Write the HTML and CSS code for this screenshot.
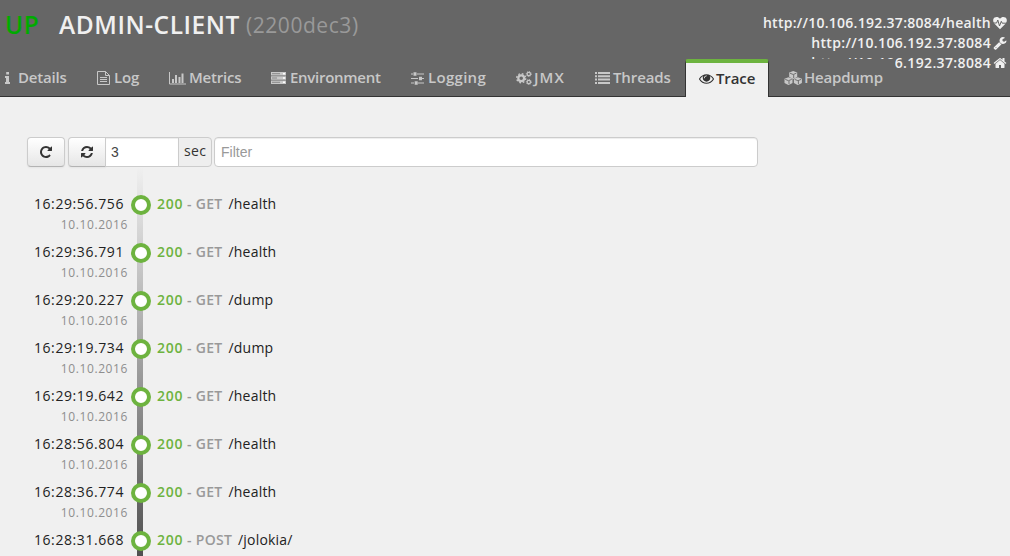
FILE: index.html
```
<!DOCTYPE html>
<html lang="en">
<head>
<meta charset="utf-8">
<title>Admin client - Trace</title>
<link rel="stylesheet" href="styles.css">
</head>
<body>
<header class="header">
  <div class="top">
    <h1 class="title"><span class="up">UP</span><span class="name">ADMIN-CLIENT</span><span class="id">(2200dec3)</span></h1>
    <div class="links">
      <a class="link"><span class="url health">http://10.106.192.37:8084/health</span><svg class="li" viewBox="0 0 14 14"><path fill="currentColor" d="M7 13.2L1.3 7.6C-.4 5.6-.1 2.8 1.6 1.6 3.300.4 5.600.9 7 2.800 8.400.9 10.700.4 12.400 1.600c1.700 1.200 2 4 .3 6z"/><path d="M0 7h3.600l1.200-3 1.700 6L8.300 5.300l.9 1.900H14" fill="none" stroke="#666" stroke-width="1"/></svg></a>
      <a class="link"><span class="url">http://10.106.192.37:8084</span><svg class="li" viewBox="0 0 1792 1792"><path fill="currentColor" d="M448 1472q0-26-19-45t-45-19-45 19-19 45 19 45 45 19 45-19 19-45zm644-420l-682 682q-37 37-90 37-52 0-91-37l-106-108q-38-36-38-90 0-53 38-91l681-681q39 98 114.500 173.500t173.500 114.500zm634-435q0 39-23 106-47 134-164.500 217.500t-258.500 83.500q-185 0-316.500-131.500t-131.500-316.500 131.500-316.500 316.500-131.500q58 0 121.500 16.500t107.500 46.500q16 11 16 28t-16 28l-293 169v224l193 107q5-3 79-48.500t135.500-81 70.500-35.500q15 0 23.500 10t8.500 25z"/></svg></a>
      <a class="link"><span class="url">http://10.106.192.37:8084</span><svg class="li" viewBox="0 0 1792 1792"><path fill="currentColor" d="M1472 992v480q0 26-19 45t-45 19h-384v-384h-256v384h-384q-26 0-45-19t-19-45v-480q0-1 .5-3t.5-3l575-474 575 474q1 2 1 6zm223-69l-62 74q-8 9-21 11h-3q-13 0-21-7l-692-577-692 577q-12 8-24 7-13-2-21-11l-62-74q-8-10-7-23.500t11-21.500l719-599q32-26 76-26t76 26l244 204v-195q0-14 9-23t23-9h192q14 0 23 9t9 23v408l219 182q10 8 11 21.500t-7 23.500z"/></svg></a>
    </div>
  </div>
  <nav class="tabs">
    <a class="tab details"><svg class="ico" viewBox="0 0 13 14"><path fill="currentColor" d="M1.200 1h2.800v2.500H1.200zM0 5h4v6h1v2H0v-2h1V7H0z"/></svg><span>Details</span></a>
    <a class="tab log"><svg class="ico" viewBox="0 0 17 14"><path fill="none" stroke="currentColor" d="M.5.5h8l4 4v9H.5zM8.500.5v4h4M3 6.500h7M3 8.500h7M3 10.500h7"/></svg><span>Log</span></a>
    <a class="tab metrics"><svg class="ico" viewBox="0 0 20 14"><path fill="none" stroke="currentColor" d="M.5 1v12H17"/><path fill="currentColor" d="M3 8h2v4H3zM6 4h2v8H6zM9.500 6h2v6h-2zM12.500 2.500h2V12h-2z"/></svg><span>Metrics</span></a>
    <a class="tab environment"><svg class="ico" viewBox="0 0 19 14"><path fill="currentColor" d="M0 1h15v3.500H0zM0 5.300h15v3.400H0zM0 9.500h15V13H0z"/><path stroke="#777" stroke-width=".8" d="M1 2.700h8M1 7h5M1 11.300h8"/><path stroke="#fff" stroke-width="1.500" d="M12 2.700h2M12 7h2M12 11.300h2"/></svg><span>Environment</span></a>
    <a class="tab logging"><svg class="ico" viewBox="0 0 17 14"><path stroke="currentColor" d="M0 3h2M6 3h7M0 7.500h7M11 7.500h2M0 12h3M7 12h6"/><path fill="currentColor" d="M2.500 1.300H5.500v3.400h-3zM8 5.800h3v3.400H8zM3.700 10.300h3v3.400h-3z"/></svg><span>Logging</span></a>
    <a class="tab jmx"><svg class="ico" viewBox="0 0 18 14"><g fill="none" stroke="currentColor"><circle cx="5.200" cy="7.200" r="2.900" stroke-width="2.200"/><circle cx="5.200" cy="7.200" r="4.500" stroke-width="1.400" stroke-dasharray="1.770 1.770"/><circle cx="12.800" cy="3" r="1.700" stroke-width="1.200"/><circle cx="12.800" cy="3" r="2.500" stroke-dasharray="1 .96"/><circle cx="12.800" cy="11" r="1.700" stroke-width="1.200"/><circle cx="12.800" cy="11" r="2.500" stroke-dasharray="1 .96"/></g></svg><span>JMX</span></a>
    <a class="tab threads"><svg class="ico" viewBox="0 0 18 14"><path stroke="currentColor" stroke-width="2" d="M0 2h2M3 2h12M0 5.300h2M3 5.300h12M0 8.600h2M3 8.600h12M0 11.900h2M3 11.900h12"/></svg><span>Threads</span></a>
    <a class="tab trace active"><svg class="ico" viewBox="0 0 1792 1792"><path fill="currentColor" d="M1664 960q-152-236-381-353 61 104 61 225 0 185-131.500 316.500t-316.500 131.500-316.500-131.500-131.500-316.500q0-121 61-225-229 117-381 353 133 205 333.500 326.500t434.500 121.500 434.500-121.500 333.500-326.500zm-720-384q0-20-14-34t-34-14q-125 0-214.500 89.500t-89.500 214.500q0 20 14 34t34 14 34-14 14-34q0-86 61-147t147-61q20 0 34-14t14-34zm848 384q0 34-20 69-140 230-376.500 368.500t-499.500 138.500-499.500-139-376.500-368q-20-35-20-69t20-69q140-229 376.500-368t499.500-139 499.500 139 376.500 368q20 35 20 69z"/></svg><span>Trace</span></a>
    <a class="tab heapdump"><svg class="ico" viewBox="0 0 20 14"><g id="cube"><path fill="currentColor" d="M9.200 0l4 1.600v4.300l-4 2-4-2V1.600z"/><path fill="none" stroke="#666" stroke-width=".9" d="M6 2.200l3.200 1.300 3.200-1.300M9.700 3.700V7"/></g><use href="#cube" x="-4.700" y="6.200"/><use href="#cube" x="4.700" y="6.200"/></svg><span>Heapdump</span></a>
  </nav>
</header>
<main class="content">
  <div class="toolbar">
    <button class="btn"><svg viewBox="0 0 1792 1792"><path fill="currentColor" d="M1664 256v448q0 26-19 45t-45 19h-448q-42 0-59-40-17-39 14-69l138-138q-148-137-349-137-104 0-198.500 40.500t-163.500 109.500-109.500 163.500-40.500 198.500 40.500 198.500 109.500 163.500 163.500 109.500 198.500 40.500q119 0 225-52t179-147q7-10 23-12 15 0 25 9l137 138q9 8 9.500 20.500t-7.500 22.500q-109 132-264 204.500t-327 72.500q-156 0-298-61t-245-164-164-245-61-298 61-298 164-245 245-164 298-61q147 0 284.500 55.500t244.500 156.500l130-129q29-31 70-14 39 17 39 59z"/></svg></button>
    <div class="group">
      <button class="btn"><svg viewBox="0 0 1792 1792"><path fill="currentColor" d="M1639 1056q0 5-1 7-64 268-268 434.500t-478 166.500q-146 0-282.500-55t-243.500-157l-129 129q-19 19-45 19t-45-19-19-45v-448q0-26 19-45t45-19h448q26 0 45 19t19 45-19 45l-137 137q71 66 161 102t187 36q134 0 250-65t186-179q11-17 53-117 8-23 30-23h192q13 0 22.500 9.500t9.500 22.500zm25-800v448q0 26-19 45t-45 19h-448q-26 0-45-19t-19-45 19-45l138-138q-148-137-349-137-134 0-250 65t-186 179q-11 17-53 117-8 23-30 23h-199q-13 0-22.500-9.500t-9.500-22.500v-7q65-268 270-434.500t480-166.500q146 0 284 55.500t245 156.500l130-129q19-19 45-19t45 19 19 45z"/></svg></button>
      <div class="seconds">3</div>
      <div class="addon">sec</div>
    </div>
    <div class="filter">Filter</div>
  </div>
  <ul class="timeline">
    <li class="event"><div class="when"><span class="time">16:29:56.756</span><span class="date">10.10.2016</span></div><i class="dot"></i><div class="what"><span class="status">200</span><span class="method">- GET</span><span class="path">/health</span></div></li>
    <li class="event"><div class="when"><span class="time">16:29:36.791</span><span class="date">10.10.2016</span></div><i class="dot"></i><div class="what"><span class="status">200</span><span class="method">- GET</span><span class="path">/health</span></div></li>
    <li class="event"><div class="when"><span class="time">16:29:20.227</span><span class="date">10.10.2016</span></div><i class="dot"></i><div class="what"><span class="status">200</span><span class="method">- GET</span><span class="path">/dump</span></div></li>
    <li class="event"><div class="when"><span class="time">16:29:19.734</span><span class="date">10.10.2016</span></div><i class="dot"></i><div class="what"><span class="status">200</span><span class="method">- GET</span><span class="path">/dump</span></div></li>
    <li class="event"><div class="when"><span class="time">16:29:19.642</span><span class="date">10.10.2016</span></div><i class="dot"></i><div class="what"><span class="status">200</span><span class="method">- GET</span><span class="path">/health</span></div></li>
    <li class="event"><div class="when"><span class="time">16:28:56.804</span><span class="date">10.10.2016</span></div><i class="dot"></i><div class="what"><span class="status">200</span><span class="method">- GET</span><span class="path">/health</span></div></li>
    <li class="event"><div class="when"><span class="time">16:28:36.774</span><span class="date">10.10.2016</span></div><i class="dot"></i><div class="what"><span class="status">200</span><span class="method">- GET</span><span class="path">/health</span></div></li>
    <li class="event"><div class="when"><span class="time">16:28:31.668</span></div><i class="dot"></i><div class="what"><span class="status">200</span><span class="method post">- POST</span><span class="path jolokia">/jolokia/</span></div></li>
  </ul>
</main>
</body>
</html>
```
FILE: styles.css
```
* { box-sizing: border-box; }
body { margin: 0; height: 556px; overflow: hidden; background: #f0f0f0; color: #333; font: 14px/20px "Open Sans", "Noto Sans", sans-serif; }
.header { height: 97px; background: #666; border-bottom: 1px solid #333; display: flex; flex-direction: column; }
.top { height: 59px; display: flex; justify-content: space-between; align-items: flex-start; }
.title { margin: 5px 0 0 5px; font-size: 24.500px; line-height: 40px; font-weight: 600; display: flex; white-space: nowrap; }
.up { width: 54px; color: #00aa00; letter-spacing: .5px; }
.name { width: 187px; color: #f0f0f0; letter-spacing: .55px; }
.id { color: #999; font-size: 21px; font-weight: 500; letter-spacing: .55px; }
.links { padding: 13px 3px 0 0; display: flex; flex-direction: column; align-items: flex-end; }
.link { height: 20px; display: flex; align-items: center; gap: 2px; color: #f0f0f0; font-weight: 600; }
.li { width: 14px; height: 14px; }
.url { letter-spacing: .36px; }
.health { letter-spacing: .26px; }
.tabs { height: 38px; flex: none; display: flex; position: relative; }
.tab { height: 37px; padding: 0 0 0 14px; display: flex; align-items: center; background: #666; color: #c8c8c8; font-weight: 600; font-size: 15px; letter-spacing: -.2px; white-space: nowrap; }
.tab span { margin-top: -2px; }
.ico { height: 14px; flex: none; }
.details { width: 83px; padding-left: 5px; }
.details .ico { width: 13px; }
.log { width: 72px; }
.log .ico { width: 17px; }
.metrics { width: 102px; }
.metrics .ico { width: 20px; }
.environment { width: 140px; letter-spacing: -.28px; }
.environment .ico { width: 19px; }
.logging { width: 105px; letter-spacing: .3px; }
.logging .ico { width: 17px; }
.jmx { width: 79px; letter-spacing: 1.1px; }
.jmx .ico { width: 18px; }
.threads { width: 104px; letter-spacing: -.1px; }
.threads .ico { width: 18px; }
.trace { width: 84px; }
.trace .ico { width: 15px; height: 15px; margin-right: 2px; }
.heapdump { width: 126px; padding-left: 15px; }
.heapdump .ico { width: 20px; }
.tab.active { height: 38px; padding: 0 0 3px 13px; background: #f0f0f0; color: #333; border: 1px solid #333; border-top: 4px solid #6db33f; border-bottom: 0; border-radius: 3px 3px 0 0; letter-spacing: -.1px; }
.content { padding: 40px 0 0 27px; }
.toolbar { height: 30px; display: flex; }
.btn { width: 38px; height: 30px; padding: 0; display: flex; align-items: center; justify-content: center; color: #333; border: 1px solid #ccc; border-bottom-color: #b3b3b3; border-radius: 4px; background: linear-gradient(#fff, #e6e6e6); box-shadow: inset 0 1px 0 #fff, 0 1px 2px rgba(0,0,0,.05); }
.btn svg { width: 14px; height: 14px; }
.group { display: flex; margin: 0 2px 0 3px; }
.group .btn { border-radius: 4px 0 0 4px; }
.seconds, .filter { background: #fff; border: 1px solid #ccc; box-shadow: inset 0 1px 1px rgba(0,0,0,.075); font: 14px/28px "Liberation Sans", Arial, sans-serif; color: #555; }
.seconds { width: 74px; padding-left: 5px; margin-left: -1px; color: #444; }
.addon { width: 34px; margin-left: -1px; padding-left: 5px; line-height: 26px; background: #eee; border: 1px solid #ccc; border-radius: 0 4px 4px 0; letter-spacing: .3px; }
.filter { width: 544px; padding-left: 6px; border-radius: 4px; color: #999; }
.timeline { list-style: none; margin: 0; padding: 27px 0 0; height: 389px; overflow: hidden; background: linear-gradient(#f0f0f0, #505050) 110px 0 / 6px 389px no-repeat; }
.event { height: 48px; display: flex; }
.when { width: 104px; display: flex; flex-direction: column; align-items: flex-end; }
.time { margin-right: 7px; letter-spacing: .58px; color: #222; }
.date { margin-right: 3px; font-size: 12px; line-height: 21px; letter-spacing: .6px; color: #8e8e8e; }
.dot { width: 20px; height: 20px; margin-top: 1px; flex: none; border: 4px solid #6db33f; border-radius: 50%; background: #fff; }
.what { display: flex; margin-left: 6px; color: #222; white-space: nowrap; }
.status { width: 30px; color: #6db33f; font-weight: 600; letter-spacing: .7px; }
.method { width: 41.500px; color: #999; font-weight: 600; letter-spacing: .3px; }
.post { width: 51px; }
.path { letter-spacing: .2px; }
```
